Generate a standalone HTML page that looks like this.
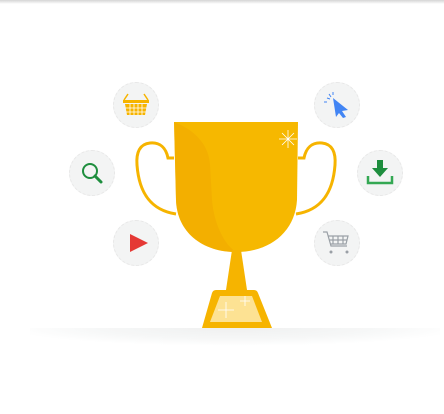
<!DOCTYPE html>
<html><head><style>
html,body{margin:0;padding:0;background:#fff;width:444px;height:414px;overflow:hidden;position:relative}
.top{position:absolute;left:0;top:0;width:444px;height:4px;background:linear-gradient(#d5d5d5,#fff)}
.floor{position:absolute;left:30px;top:328px;width:410px;height:18px;background:radial-gradient(ellipse 55% 100% at 50% 0%,#eff0f0 0%,#f6f7f7 60%,#fff 100%)}
.c{position:absolute;width:46px;height:46px;border-radius:50%;background:#f3f4f4;border:1px dashed #e8e8e8;box-sizing:border-box}
</style></head><body>
<div class="top"></div>
<div class="floor"></div>
<div class="c" style="left:113px;top:82px"></div>
<div class="c" style="left:69px;top:150px"></div>
<div class="c" style="left:113px;top:220px"></div>
<div class="c" style="left:314px;top:82px"></div>
<div class="c" style="left:357px;top:150px"></div>
<div class="c" style="left:314px;top:220px"></div>
<svg width="444" height="414" style="position:absolute;left:0;top:0">
<g fill="#f6b400">
<path d="M128 94 L124 100 M144 94 L148 100" stroke="#f6b400" stroke-width="1.5"/>
<rect x="123" y="100" width="26" height="3"/>
<path d="M125 104 H147 L145 115 H127 Z"/>
</g>
<g stroke="#fff" stroke-width="0.8"><path d="M130 104V115M134 104V115M138 104V115M142 104V115M125 108H147M126 112H146"/></g>
<circle cx="90" cy="171" r="7" fill="none" stroke="#1e8e3e" stroke-width="2"/>
<path d="M95 176 L101 182" stroke="#1e8e3e" stroke-width="3" stroke-linecap="round"/>
<path d="M130 234 L148 243 L130 252 Z" fill="#e53935"/>
<path d="M333 98 L348 110 L342 111 L346 117 L343 118 L339 113 L336 117 Z" fill="#4285f4"/>
<path d="M327 98l3 1M329 94l2 3M333 92v3M324 102h3" stroke="#4285f4" stroke-width="1"/>
<path d="M377 160h6v8h5l-8 9-8-9h5z" fill="#1e8e3e"/>
<path d="M368 176v7h24v-7" fill="none" stroke="#34a853" stroke-width="2.5"/>
<g fill="none" stroke="#9aa0a6" stroke-width="1.2">
<path d="M323 232h4l4 14h16"/><path d="M328 236h20l-2 8h-16"/>
<path d="M333 236v8M338 236v8M343 236v8M329 240h18"/>
</g>
<circle cx="331" cy="252" r="1.5" fill="#9aa0a6"/><circle cx="347" cy="252" r="1.5" fill="#9aa0a6"/>
<path d="M174 158 H168 C166 148 160 142 150 143 C140 144 136 152 137 165 C139 192 150 210 176 214" fill="none" stroke="#f6b400" stroke-width="3"/>
<path d="M298 158 H304 C306 148 312 142 322 143 C332 144 336 152 335 165 C333 192 322 210 296 214" fill="none" stroke="#f6b400" stroke-width="3"/>
<path d="M174 122 H298 L297 200 C295 232 270 252 236 252 C202 252 177 232 176 200 Z" fill="#f6b800"/>
<path d="M174 122 C195 130 209 145 210 165 L212 200 C214 225 225 245 236 252 C202 252 177 232 176 200 Z" fill="#f0a800" opacity="0.55"/>
<path d="M288 130v18M279 139h18M282 133l12 12M294 133l-12 12" stroke="#fff" stroke-width="0.8"/>
<path d="M232 250 H241 L247 290 H226 Z" fill="#f6b400"/>
<path d="M216 290 H254 Q257 290 258 293 L272 328 H202 L212 293 Q213 290 216 290 Z" fill="#f6b400"/>
<path d="M220 296 H252 L262 322 H210 Z" fill="#fde293"/>
<path d="M226 302v16M218 310h16M245 296v10M240 301h10" stroke="#fff" stroke-width="0.8"/>
</svg>
</body></html>
